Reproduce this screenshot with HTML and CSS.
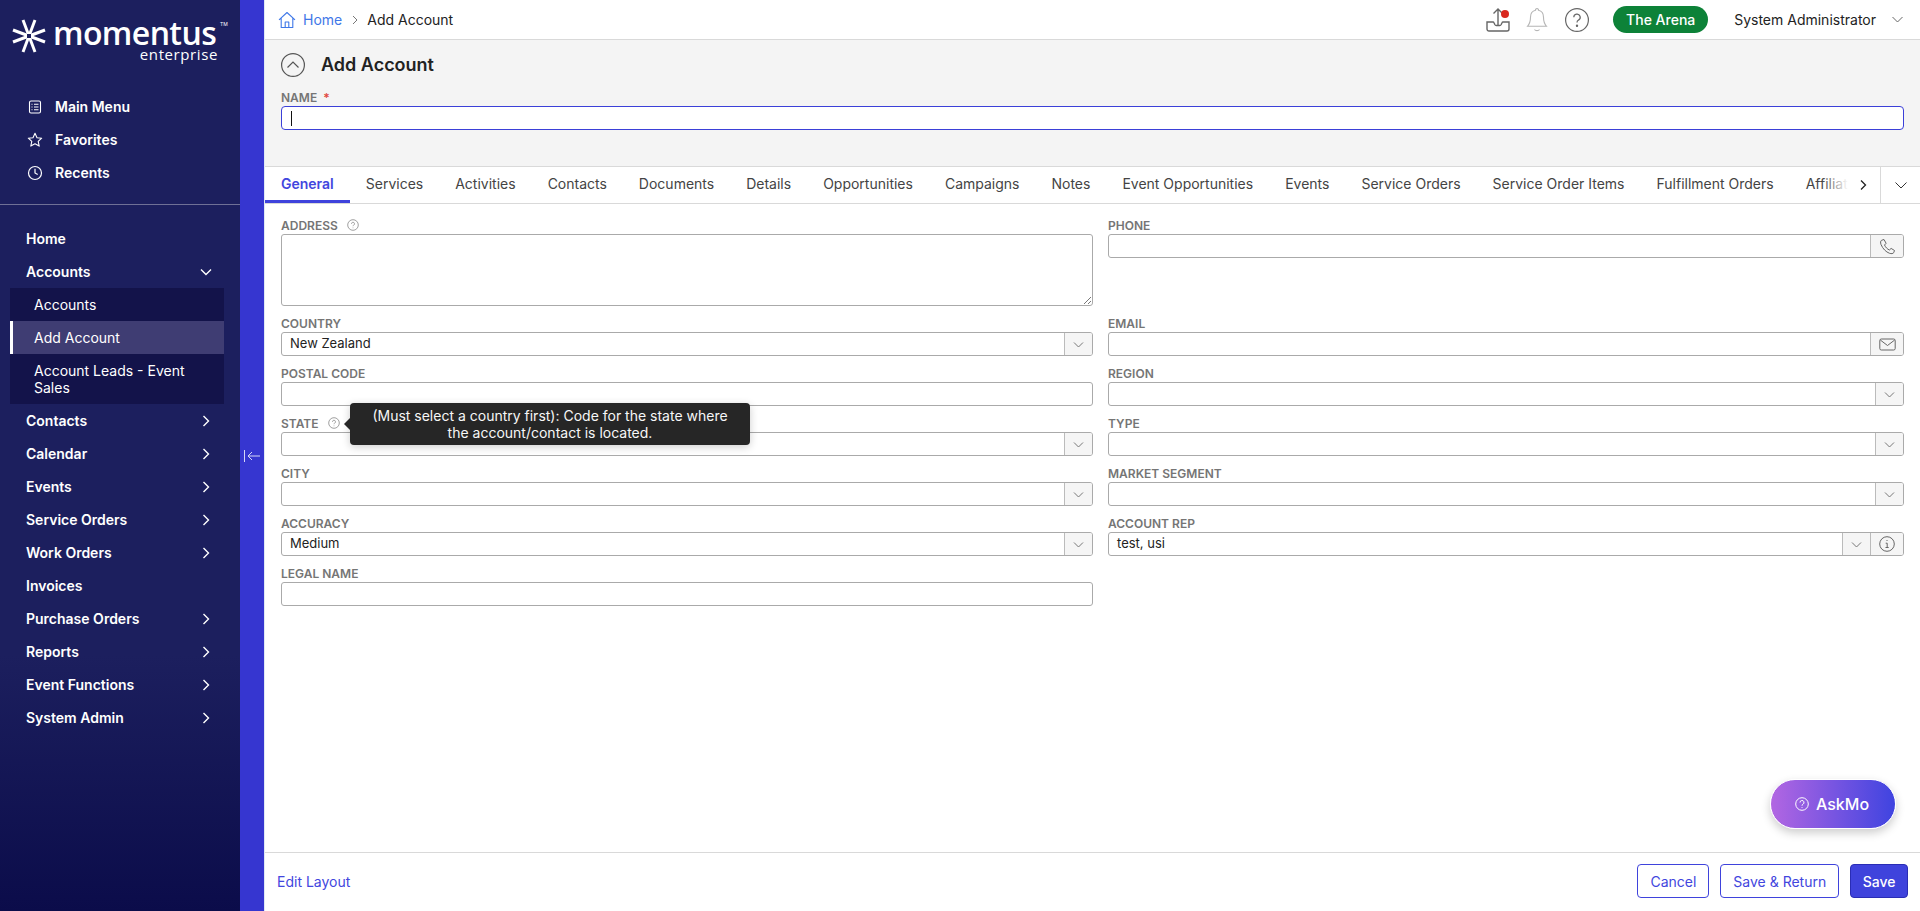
FILE: index.html
```html
<!DOCTYPE html>
<html>
  <head>
    <title>Add Account</title>
    <link rel="stylesheet" href="styles.css">
  </head>

  <body>
    <div class="app">
      <aside class="sidebar">
        <div class="logo">
          <svg class="logo-star" width="36" height="36" viewBox="0 0 36 36">
            <g stroke="#fff" stroke-width="3" stroke-linecap="butt">
              <line x1="18" y1="18" x2="12" y2="2"/>
              <line x1="18" y1="18" x2="24" y2="2"/>
              <line x1="18" y1="18" x2="2" y2="12"/>
              <line x1="18" y1="18" x2="34" y2="12"/>
              <line x1="18" y1="18" x2="2" y2="24"/>
              <line x1="18" y1="18" x2="34" y2="24"/>
              <line x1="18" y1="18" x2="12" y2="34"/>
              <line x1="18" y1="18" x2="24" y2="34"/>
            </g>
            <rect x="16" y="16" width="4" height="4" fill="#1c1f5e"/>
          </svg>
          <div class="logo-text">
            <span class="logo-name">momentus</span>
            <span class="logo-tm">TM</span>
            <span class="logo-sub">enterprise</span>
          </div>
        </div>

        <nav class="quick-nav">
          <a class="quick-item">
            <svg width="16" height="16" viewBox="0 0 16 16" fill="none" stroke="#fff" stroke-width="1.1">
              <rect x="2.500" y="2" width="11" height="12" rx="1.500"/>
              <path d="M7 5.200h4.500M7 8h4.500M7 10.800h4.500M4.500 5.200h1M4.500 8h1M4.500 10.800h1"/>
            </svg>
            Main Menu
          </a>
          <a class="quick-item">
            <svg width="16" height="16" viewBox="0 0 16 16" fill="none" stroke="#fff" stroke-width="1.1" stroke-linejoin="round">
              <path d="M8 1.300l2 4.400 4.700.5-3.500 3.200 1 4.700L8 11.700l-4.200 2.400 1-4.700L1.300 6.200 6 5.700z"/>
            </svg>
            Favorites
          </a>
          <a class="quick-item">
            <svg width="16" height="16" viewBox="0 0 16 16" fill="none" stroke="#fff" stroke-width="1.2">
              <circle cx="8" cy="8" r="6.500"/>
              <path d="M8 3.800V8l2.700 1.600"/>
            </svg>
            Recents
          </a>
        </nav>

        <nav class="main-nav">
          <a class="nav-item">Home</a>
          <a class="nav-item">Accounts
            <svg width="14" height="14" viewBox="0 0 14 14" fill="none" stroke="#fff" stroke-width="1.4"><path d="M2 4.500l5 5 5-5"/></svg>
          </a>
          <div class="sub-nav">
            <a class="sub-item">Accounts</a>
            <a class="sub-item active">Add Account</a>
            <a class="sub-item tall">Account Leads - Event Sales</a>
          </div>
          <a class="nav-item">Contacts
            <svg width="14" height="14" viewBox="0 0 14 14" fill="none" stroke="#fff" stroke-width="1.4"><path d="M4.500 2l5 5-5 5"/></svg>
          </a>
          <a class="nav-item">Calendar
            <svg width="14" height="14" viewBox="0 0 14 14" fill="none" stroke="#fff" stroke-width="1.4"><path d="M4.500 2l5 5-5 5"/></svg>
          </a>
          <a class="nav-item">Events
            <svg width="14" height="14" viewBox="0 0 14 14" fill="none" stroke="#fff" stroke-width="1.4"><path d="M4.500 2l5 5-5 5"/></svg>
          </a>
          <a class="nav-item">Service Orders
            <svg width="14" height="14" viewBox="0 0 14 14" fill="none" stroke="#fff" stroke-width="1.4"><path d="M4.500 2l5 5-5 5"/></svg>
          </a>
          <a class="nav-item">Work Orders
            <svg width="14" height="14" viewBox="0 0 14 14" fill="none" stroke="#fff" stroke-width="1.4"><path d="M4.500 2l5 5-5 5"/></svg>
          </a>
          <a class="nav-item">Invoices</a>
          <a class="nav-item">Purchase Orders
            <svg width="14" height="14" viewBox="0 0 14 14" fill="none" stroke="#fff" stroke-width="1.4"><path d="M4.500 2l5 5-5 5"/></svg>
          </a>
          <a class="nav-item">Reports
            <svg width="14" height="14" viewBox="0 0 14 14" fill="none" stroke="#fff" stroke-width="1.4"><path d="M4.500 2l5 5-5 5"/></svg>
          </a>
          <a class="nav-item">Event Functions
            <svg width="14" height="14" viewBox="0 0 14 14" fill="none" stroke="#fff" stroke-width="1.4"><path d="M4.500 2l5 5-5 5"/></svg>
          </a>
          <a class="nav-item">System Admin
            <svg width="14" height="14" viewBox="0 0 14 14" fill="none" stroke="#fff" stroke-width="1.4"><path d="M4.500 2l5 5-5 5"/></svg>
          </a>
        </nav>
      </aside>

      <div class="rail">
        <svg width="18" height="14" viewBox="0 0 18 14" fill="none" stroke="#d5d6f7" stroke-width="1"><path d="M1.500 1v12M17 7H5M9 3L5 7l4 4"/></svg>
      </div>

      <main class="main">
        <header class="topbar">
          <div class="crumbs">
            <svg width="18" height="18" viewBox="0 0 18 18" fill="none" stroke="#3f78e8" stroke-width="1.1" stroke-linejoin="round">
              <path d="M1 8.800L9 1.500l8 7.300M3.200 7.200V16.500h11.600V7.200M7.200 16.500v-5.500h3.600v5.500"/>
            </svg>
            <a class="crumb-link">Home</a>
            <svg width="10" height="10" viewBox="0 0 10 10" fill="none" stroke="#777" stroke-width="1"><path d="M3 1l4 4-4 4"/></svg>
            <span>Add Account</span>
          </div>
          <div class="top-actions">
            <svg class="top-upload" width="26" height="26" viewBox="0 0 26 26" fill="none" stroke="#666" stroke-width="1.4">
              <path d="M12 18V2M7.500 6.500L12 2l4.500 4.500"/>
              <path d="M1 15h6c.5 0 .8.3 1 .8l.8 1.700c.3.6.8 1 1.500 1h3.400c.7 0 1.200-.4 1.500-1l.8-1.700c.2-.5.5-.8 1-.8h6v7a2 2 0 0 1-2 2H3a2 2 0 0 1-2-2z"/>
              <circle cx="19" cy="7" r="4" fill="#d9281e" stroke="none"/>
            </svg>
            <svg class="top-bell" width="22" height="26" viewBox="0 0 22 26" fill="none" stroke="#b5b5b5" stroke-width="1.1">
              <path d="M11 1.500a1.500 1.500 0 0 1 1.500 1.800c3.500.7 5 3.500 5 7 0 5 1.200 7 3 9H1.500c1.800-2 3-4 3-9 0-3.500 1.500-6.300 5-7A1.500 1.500 0 0 1 11 1.500zM8.500 22.500c1 1.500 4 1.500 5 0"/>
            </svg>
            <svg class="top-help" width="24" height="24" viewBox="0 0 24 24" fill="none" stroke="#666" stroke-width="1.2">
              <circle cx="12" cy="12" r="11.400"/>
              <path d="M8.800 9.300a3.200 3.200 0 1 1 4.700 2.800c-1 .6-1.500 1.200-1.500 2.400"/>
              <circle cx="12" cy="17.800" r=".6" fill="#666"/>
            </svg>
            <span class="venue-badge">The Arena</span>
            <span class="user-name">System Administrator</span>
            <svg class="caret" width="11" height="11" viewBox="0 0 11 11" fill="none" stroke="#666" stroke-width="1"><path d="M.5 3l5 5 5-5"/></svg>
          </div>
        </header>

        <section class="page-head">
          <div class="title-row">
            <svg width="24" height="24" viewBox="0 0 24 24" fill="none" stroke="#555" stroke-width="1.2">
              <circle cx="12" cy="12" r="11.400"/>
              <path d="M6.500 14.500L12 9l5.500 5.500"/>
            </svg>
            <h1>Add Account</h1>
          </div>
          <label class="field-label">NAME <span class="req">*</span></label>
          <div class="name-input"><span class="text-caret"></span></div>
        </section>

        <div class="tabs-bar">
          <div class="tabs">
            <a class="tab active">General</a>
            <a class="tab">Services</a>
            <a class="tab">Activities</a>
            <a class="tab">Contacts</a>
            <a class="tab">Documents</a>
            <a class="tab">Details</a>
            <a class="tab">Opportunities</a>
            <a class="tab">Campaigns</a>
            <a class="tab">Notes</a>
            <a class="tab">Event Opportunities</a>
            <a class="tab">Events</a>
            <a class="tab">Service Orders</a>
            <a class="tab">Service Order Items</a>
            <a class="tab">Fulfillment Orders</a>
            <a class="tab">Affiliations</a>
            <div class="tabs-fade">
              <svg width="10" height="12" viewBox="0 0 10 12" fill="none" stroke="#222" stroke-width="1.3"><path d="M3 1.500L7.500 6 3 10.500"/></svg>
            </div>
          </div>
          <div class="tabs-more">
            <svg width="12" height="12" viewBox="0 0 12 12" fill="none" stroke="#333" stroke-width="1"><path d="M.5 3.500L6 9l5.500-5.500"/></svg>
          </div>
        </div>

        <section class="form">
          <div class="form-col">
            <div class="field address">
              <label class="field-label">ADDRESS
                <svg class="hint" width="12" height="12" viewBox="0 0 12 12" fill="none" stroke="#888" stroke-width=".8"><circle cx="6" cy="6" r="5.300"/><path d="M4.500 4.800a1.500 1.500 0 1 1 2.200 1.300c-.5.3-.7.600-.7 1.100M6 8.600v.6"/></svg>
              </label>
              <div class="text-area">
                <svg class="resize-grip" width="8" height="8" viewBox="0 0 8 8" stroke="#555" stroke-width=".8"><path d="M8 1L1 8M8 5L5 8"/></svg>
              </div>
            </div>
            <div class="field">
              <label class="field-label">COUNTRY</label>
              <div class="input"><span class="value">New Zealand</span><span class="addon"><svg width="11" height="11" viewBox="0 0 11 11" fill="none" stroke="#777" stroke-width="1"><path d="M1 3.500l4.500 4.500L10 3.500"/></svg></span></div>
            </div>
            <div class="field">
              <label class="field-label">POSTAL CODE</label>
              <div class="input"></div>
            </div>
            <div class="field state">
              <label class="field-label">STATE
                <svg class="hint" width="12" height="12" viewBox="0 0 12 12" fill="none" stroke="#888" stroke-width=".8"><circle cx="6" cy="6" r="5.300"/><path d="M4.500 4.800a1.500 1.500 0 1 1 2.200 1.300c-.5.3-.7.600-.7 1.100M6 8.600v.6"/></svg>
              </label>
              <div class="input"><span class="value"></span><span class="addon"><svg width="11" height="11" viewBox="0 0 11 11" fill="none" stroke="#777" stroke-width="1"><path d="M1 3.500l4.500 4.500L10 3.500"/></svg></span></div>
              <div class="tooltip">(Must select a country first): Code for the state where the account/contact is located.</div>
            </div>
            <div class="field">
              <label class="field-label">CITY</label>
              <div class="input"><span class="value"></span><span class="addon"><svg width="11" height="11" viewBox="0 0 11 11" fill="none" stroke="#777" stroke-width="1"><path d="M1 3.500l4.500 4.500L10 3.500"/></svg></span></div>
            </div>
            <div class="field">
              <label class="field-label">ACCURACY</label>
              <div class="input"><span class="value">Medium</span><span class="addon"><svg width="11" height="11" viewBox="0 0 11 11" fill="none" stroke="#777" stroke-width="1"><path d="M1 3.500l4.500 4.500L10 3.500"/></svg></span></div>
            </div>
            <div class="field">
              <label class="field-label">LEGAL NAME</label>
              <div class="input"></div>
            </div>
          </div>

          <div class="form-col">
            <div class="field address">
              <label class="field-label">PHONE</label>
              <div class="input"><span class="value"></span><span class="addon wide">
                <svg width="17" height="17" viewBox="0 0 17 17" fill="none" stroke="#666" stroke-width="1"><path d="M5 1.500L2.500 2.300C1.500 3 1.300 4.500 2 6.500c1.800 4.300 5 7.500 8.500 8.800 2 .6 3.500.4 4.200-.6l.8-2.200-3.400-2.100-1.700 1.600c-2-.8-3.800-2.700-4.900-5l1.600-1.700z"/></svg>
              </span></div>
            </div>
            <div class="field">
              <label class="field-label">EMAIL</label>
              <div class="input"><span class="value"></span><span class="addon wide">
                <svg width="17" height="15" viewBox="0 0 17 15" fill="none" stroke="#666" stroke-width="1"><rect x=".8" y="2" width="15.400" height="11" rx="1.500"/><path d="M1.300 3l7.200 5.500L15.700 3"/></svg>
              </span></div>
            </div>
            <div class="field">
              <label class="field-label">REGION</label>
              <div class="input"><span class="value"></span><span class="addon"><svg width="11" height="11" viewBox="0 0 11 11" fill="none" stroke="#777" stroke-width="1"><path d="M1 3.500l4.500 4.500L10 3.500"/></svg></span></div>
            </div>
            <div class="field">
              <label class="field-label">TYPE</label>
              <div class="input"><span class="value"></span><span class="addon"><svg width="11" height="11" viewBox="0 0 11 11" fill="none" stroke="#777" stroke-width="1"><path d="M1 3.500l4.500 4.500L10 3.500"/></svg></span></div>
            </div>
            <div class="field">
              <label class="field-label">MARKET SEGMENT</label>
              <div class="input"><span class="value"></span><span class="addon"><svg width="11" height="11" viewBox="0 0 11 11" fill="none" stroke="#777" stroke-width="1"><path d="M1 3.500l4.500 4.500L10 3.500"/></svg></span></div>
            </div>
            <div class="field">
              <label class="field-label">ACCOUNT REP</label>
              <div class="input"><span class="value">test, usi</span><span class="addon"><svg width="11" height="11" viewBox="0 0 11 11" fill="none" stroke="#777" stroke-width="1"><path d="M1 3.500l4.500 4.500L10 3.500"/></svg></span><span class="addon wide">
                <svg width="16" height="16" viewBox="0 0 16 16" fill="none" stroke="#666" stroke-width="1"><circle cx="8" cy="8" r="7.300"/><path d="M8 4v1M6.700 7.200H8.200v4.300M6.500 11.500h3.200"/></svg>
              </span></div>
            </div>
          </div>
        </section>

        <button class="askmo">
          <svg width="14" height="14" viewBox="0 0 14 14" fill="none" stroke="#fff" stroke-width="1"><circle cx="7" cy="7" r="6.300"/><path d="M5 5.500a2 2 0 1 1 3 1.700c-.7.400-1 .8-1 1.500M7 10v.8"/></svg>
          AskMo
        </button>

        <footer class="footer">
          <a class="edit-layout">Edit Layout</a>
          <div class="footer-actions">
            <button class="btn">Cancel</button>
            <button class="btn">Save &amp; Return</button>
            <button class="btn primary">Save</button>
          </div>
        </footer>
      </main>
    </div>
  </body>
</html>
```
FILE: styles.css
```css
* {
  box-sizing: border-box;
}

html,
body {
  margin: 0;
  height: 100%;
}

body {
  font-family: Inter, "Liberation Sans", sans-serif;
  font-size: 14px;
  color: #222;
  background-color: #fff;
  overflow: hidden;
}

.app {
  display: flex;
  height: 911px;
}

/* Sidebar */
.sidebar {
  width: 240px;
  flex-shrink: 0;
  color: #fff;
  background: linear-gradient(to bottom, #1c1f5e 0, #1c1f5e 72%, #0b0c4a 100%);
}

.logo {
  display: flex;
  align-items: flex-start;
  height: 88px;
  padding: 18px 0 0 11px;
}

.logo-text {
  position: relative;
  width: 168px;
  margin-left: 6px;
}

.logo-name {
  display: block;
  width: 165px;
  height: 30px;
  font-family: "Open Sans", sans-serif;
  font-size: 32px;
  line-height: 30px;
  font-weight: 600;
  letter-spacing: -.6px;
  white-space: nowrap;
}

.logo-tm {
  position: absolute;
  top: 3px;
  left: 167px;
  font-size: 5px;
}

.logo-sub {
  display: block;
  font-family: "Open Sans", sans-serif;
  font-size: 15px;
  line-height: 13px;
  letter-spacing: .6px;
  text-align: right;
  padding-right: 3px;
}

.quick-nav {
  padding: 2px 0 15px;
  border-bottom: 1px solid #6f7096;
}

.quick-item {
  display: flex;
  align-items: center;
  gap: 12px;
  height: 33px;
  padding-left: 27px;
  font-weight: 600;
}

.main-nav {
  padding-top: 17px;
}

.nav-item {
  display: flex;
  align-items: center;
  justify-content: space-between;
  height: 33px;
  padding: 0 27px 0 26px;
  font-weight: 600;
}

.sub-nav {
  margin: 0 16px 0 10px;
  background-color: #13134a;
}

.sub-item {
  display: flex;
  align-items: center;
  height: 33px;
  padding-left: 24px;
  padding-right: 30px;
  line-height: 17px;
}

.sub-item.active {
  background-color: #3f3d73;
  border-left: 3px solid #fff;
  padding-left: 21px;
}

.sub-item.tall {
  height: 50px;
}

.rail {
  display: flex;
  align-items: center;
  justify-content: center;
  width: 24px;
  flex-shrink: 0;
  background-color: #3636d0;
}

/* Main area */
.main {
  position: relative;
  display: flex;
  flex-direction: column;
  flex: 1;
  min-width: 0;
  border-left: 1px solid #dfe8f5;
}

.topbar {
  display: flex;
  align-items: center;
  justify-content: space-between;
  height: 40px;
  padding: 0 17px 0 13px;
  border-bottom: 1px solid #d9d9d9;
}

.crumbs {
  display: flex;
  align-items: center;
  gap: 7px;
}

.crumb-link {
  margin-right: 1px;
  color: #3f78e8;
}

.top-actions {
  display: flex;
  align-items: center;
}

.top-bell {
  margin-left: 14px;
}

.top-help {
  margin-left: 17px;
}

.venue-badge {
  width: 95px;
  height: 27px;
  margin-left: 24px;
  border-radius: 14px;
  background-color: #0d8238;
  color: #fff;
  font-weight: 500;
  line-height: 27px;
  text-align: center;
}

.user-name {
  margin-left: 26px;
}

.caret {
  margin-left: 16px;
}

.page-head {
  height: 127px;
  padding: 8px 16px 0;
  background-color: #f4f4f4;
  border-bottom: 1px solid #d9d9d9;
}

.title-row {
  display: flex;
  align-items: center;
  gap: 16px;
  height: 33px;
  margin-bottom: 9px;
}

.title-row h1 {
  margin: 0;
  font-size: 18px;
  font-weight: 600;
}

.field-label {
  display: flex;
  align-items: center;
  gap: 6px;
  height: 14px;
  font-size: 12px;
  font-weight: 600;
  color: #757575;
}

.hint {
  margin-left: 3px;
}

.req {
  color: #e0483e;
}

.name-input {
  display: flex;
  align-items: center;
  height: 24px;
  margin-top: 2px;
  padding-left: 9px;
  background-color: #fff;
  border: 1px solid #3b40d8;
  border-radius: 4px;
}

.text-caret {
  width: 1px;
  height: 15px;
  background-color: #111;
}

/* Tabs */
.tabs-bar {
  display: flex;
  height: 37px;
  border-bottom: 1px solid #d9d9d9;
}

.tabs {
  position: relative;
  display: flex;
  flex: 1;
  min-width: 0;
  overflow: hidden;
}

.tab {
  flex-shrink: 0;
  padding: 0 16px;
  line-height: 33px;
  color: #444;
  white-space: nowrap;
}

.tab.active {
  color: #4246de;
  font-weight: 600;
  border-bottom: 3px solid #3f43dc;
}

.tabs-fade {
  position: absolute;
  top: 0;
  right: 0;
  bottom: 0;
  display: flex;
  align-items: center;
  justify-content: flex-end;
  width: 58px;
  padding-right: 12px;
  background: linear-gradient(to right, rgba(255, 255, 255, 0), #fff 45%);
}

.tabs-more {
  display: flex;
  align-items: center;
  justify-content: center;
  width: 40px;
  border-left: 1px solid #d9d9d9;
}

/* Form */
.form {
  display: flex;
  gap: 15px;
  padding: 12px 15px 0 16px;
}

.form-col {
  width: 812px;
}

.form-col + .form-col {
  width: 796px;
}

.field {
  position: relative;
  height: 50px;
  padding-top: 2px;
}

.field.address {
  height: 98px;
}

.input {
  display: flex;
  height: 24px;
  margin-top: 2px;
  background-color: #fff;
  border: 1px solid #aaa;
  border-radius: 3px;
  overflow: hidden;
}

.value {
  flex: 1;
  padding-left: 8px;
  font-size: 13px;
  line-height: 20px;
}

.addon {
  display: flex;
  align-items: center;
  justify-content: center;
  width: 28px;
  background-color: #f5f5f5;
  border-left: 1px solid #bbb;
}

.addon.wide {
  width: 33px;
}

.text-area {
  position: relative;
  height: 72px;
  margin-top: 2px;
  border: 1px solid #aaa;
  border-radius: 3px;
}

.resize-grip {
  position: absolute;
  right: 1px;
  bottom: 1px;
}

.tooltip {
  position: absolute;
  top: -11px;
  left: 69px;
  z-index: 2;
  width: 400px;
  height: 42px;
  padding: 4px 20px;
  border-radius: 4px;
  background-color: #262626;
  color: #f7f7f7;
  font-size: 14px;
  line-height: 17px;
  text-align: center;
  box-shadow: 0 2px 8px rgba(0, 0, 0, .2);
}

.tooltip::before {
  content: "";
  position: absolute;
  top: 15px;
  left: -6px;
  width: 0;
  height: 0;
  border-top: 6px solid transparent;
  border-bottom: 6px solid transparent;
  border-right: 6px solid #262626;
}

.askmo {
  position: absolute;
  top: 779px;
  right: 24px;
  display: flex;
  align-items: center;
  justify-content: center;
  gap: 7px;
  width: 126px;
  height: 50px;
  padding-right: 8px;
  border: 1px solid #fff;
  border-radius: 25px;
  background: linear-gradient(to right, #b266e2, #3f44e0);
  color: #fff;
  font-family: inherit;
  font-size: 16px;
  font-weight: 500;
  box-shadow: 0 4px 10px rgba(0, 0, 0, .2);
}

/* Footer */
.footer {
  display: flex;
  align-items: center;
  justify-content: space-between;
  height: 59px;
  margin-top: auto;
  padding: 0 12px 2px;
  border-top: 1px solid #d9d9d9;
}

.edit-layout {
  color: #4246de;
}

.footer-actions {
  display: flex;
  gap: 11px;
}

.btn {
  height: 34px;
  padding: 0 12px;
  border: 1px solid #3f43dc;
  border-radius: 4px;
  background-color: #fff;
  color: #4246de;
  font-family: inherit;
  font-size: 14px;
}

.btn.primary {
  padding: 0 11.500px;
  background-color: #3f43dc;
  border-color: #2a2db5;
  color: #fff;
  font-weight: 500;
}
```
